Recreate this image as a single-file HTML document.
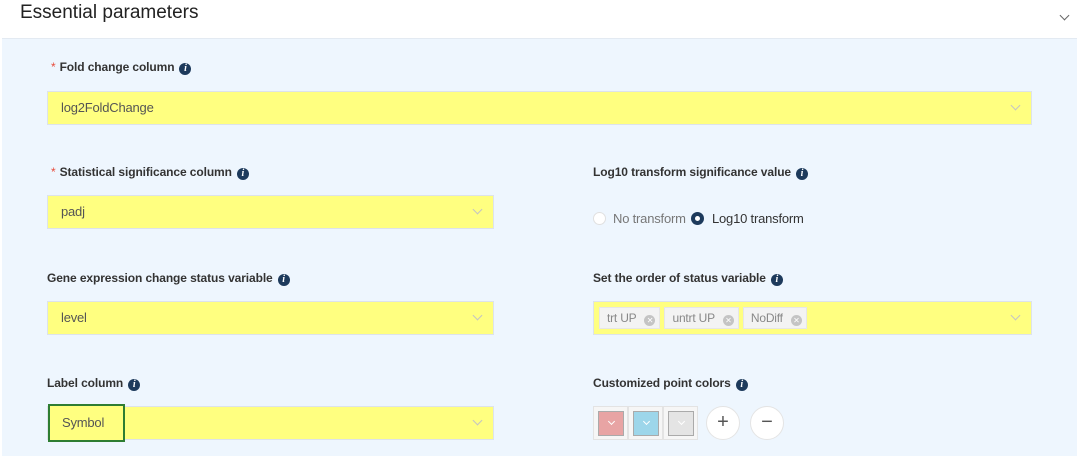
<!DOCTYPE html>
<html><head><meta charset="utf-8"><style>
*{box-sizing:border-box;margin:0;padding:0}
body{width:1080px;height:456px;overflow:hidden;background:#fff;font-family:"Liberation Sans",Arial,sans-serif;position:relative}
.h{position:absolute;left:20px;top:2px;font-size:19px;color:#222}
.panel{position:absolute;left:2px;top:38px;width:1075px;height:418px;background:#eef6fe;border-top:1px solid #e3eaf2}
.lab{position:absolute;font-size:12px;font-weight:bold;color:#333;letter-spacing:-0.1px}
.lab .st{color:#e74c3c;font-weight:normal;margin-right:4px}
.i{display:inline-block;width:12px;height:12px;border-radius:50%;background:#1d3a5c;color:#fff;font-size:10px;font-style:italic;font-family:"Liberation Serif",serif;text-align:center;line-height:12px;margin-left:5px;vertical-align:0px;font-weight:bold}
.sel{position:absolute;height:34px;background:#ffff80;border:1px solid #dde3ea;font-size:13px;color:#555;padding-left:13px;line-height:32px;letter-spacing:-0.2px}
.chev{position:absolute;right:12px;width:7px;height:7px;border-right:1px solid #c4c4c4;border-bottom:1px solid #c4c4c4;transform:rotate(45deg);top:10px}
.tag{display:inline-block;height:22px;line-height:21px;background:#f3f3f3;border:1px solid #e6e6e6;font-size:12px;color:#888;padding:0 4px 0 7px;margin-right:4px;vertical-align:top;margin-top:5px}
.x{display:inline-block;width:11px;height:11px;border-radius:50%;background:#c4c4c4;color:#fff;font-size:8px;line-height:11px;text-align:center;margin-left:8px;vertical-align:-1px}
.sw{position:absolute;top:406px;width:35px;height:34px;border:1px solid #e3e3e3;background:#f6f6f6}
.sw div{position:absolute;left:4px;top:4px;width:26px;height:25px;border:1px solid #aaa}
.sw div:after{content:"";position:absolute;left:10px;top:7px;width:4px;height:4px;border-right:1px solid #fff;border-bottom:1px solid #fff;transform:rotate(45deg)}
.cb{position:absolute;top:406px;width:34px;height:34px;border-radius:50%;background:#fff;border:1px solid #e4e4e4;text-align:center;line-height:31px;font-size:20px;color:#555}
</style></head><body>
<div class="h">Essential parameters</div>
<div style="position:absolute;left:1061px;top:12px;width:7px;height:7px;border-right:1.5px solid #666;border-bottom:1.5px solid #666;transform:rotate(45deg)"></div>
<div class="panel"></div>

<div class="lab" style="left:51px;top:60px"><span class="st">*</span>Fold change column<span class="i">i</span></div>
<div class="sel" style="left:47px;top:91px;width:985px">log2FoldChange<span class="chev"></span></div>

<div class="lab" style="left:51px;top:165px"><span class="st">*</span>Statistical significance column<span class="i">i</span></div>
<div class="sel" style="left:47px;top:195px;width:447px">padj<span class="chev"></span></div>

<div class="lab" style="left:593px;top:165px">Log10 transform significance value<span class="i">i</span></div>
<div style="position:absolute;left:593px;top:212px;width:13px;height:13px;border-radius:50%;background:#fff;border:1px solid #e0e0e0"></div>
<div style="position:absolute;left:613px;top:211px;font-size:13px;color:#777;letter-spacing:-0.2px">No transform</div>
<div style="position:absolute;left:691px;top:212px;width:13px;height:13px;border-radius:50%;background:#1d3a5c"><div style="position:absolute;left:4px;top:4px;width:5px;height:5px;border-radius:50%;background:#fff"></div></div>
<div style="position:absolute;left:712px;top:211px;font-size:13px;color:#333;letter-spacing:-0.2px">Log10 transform</div>

<div class="lab" style="left:47px;top:271px">Gene expression change status variable<span class="i">i</span></div>
<div class="sel" style="left:47px;top:301px;width:447px">level<span class="chev"></span></div>

<div class="lab" style="left:593px;top:271px">Set the order of status variable<span class="i">i</span></div>
<div class="sel" style="left:593px;top:301px;width:439px;padding-left:5px;line-height:normal"><span class="tag">trt UP<span class="x">✕</span></span><span class="tag">untrt UP<span class="x">✕</span></span><span class="tag">NoDiff<span class="x">✕</span></span><span class="chev"></span></div>

<div class="lab" style="left:47px;top:376px">Label column<span class="i">i</span></div>
<div class="sel" style="left:47px;top:406px;width:447px">&nbsp;<span class="chev"></span></div>
<div style="position:absolute;left:48px;top:404px;width:77px;height:38px;border:2px solid #2e7d32;background:#ffff80;font-size:13px;color:#555;padding-left:12px;line-height:34px;letter-spacing:-0.2px">Symbol</div>

<div class="lab" style="left:593px;top:376px">Customized point colors<span class="i">i</span></div>
<div class="sw" style="left:593px"><div style="background:#e8a4a4"></div></div>
<div class="sw" style="left:628px"><div style="background:#9dd6ea"></div></div>
<div class="sw" style="left:663px"><div style="background:#e4e4e4"></div></div>
<div class="cb" style="left:706px">+</div>
<div class="cb" style="left:750px">−</div>
</body></html>
